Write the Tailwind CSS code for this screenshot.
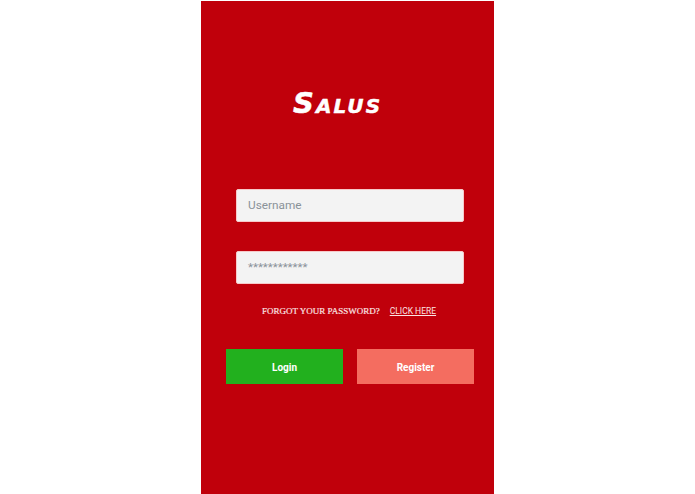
<!DOCTYPE html>
<html lang="en">
<head>
  <meta charset="UTF-8" />
  <meta name="viewport" content="width=device-width, initial-scale=1.0"/>
  <title>Salus</title>
  <script src="https://cdn.jsdelivr.net/npm/@tailwindcss/browser@4"></script>
</head>
<body class="bg-white">
  <div class="h-[494px] overflow-hidden pt-px">
    <main class="ml-[201px] w-[293px] h-[493px] bg-[#c0000b] font-['Roboto',sans-serif]">
      <!-- logo -->
      <div class="pt-[84px] h-[188px] pl-[92px]">
        <span class="block text-white font-['DejaVu_Sans',sans-serif] font-bold italic text-[29px] leading-[36px] tracking-[2.1px] [font-variant:small-caps] [-webkit-text-stroke:0.5px_white]">Salus</span>
      </div>
      <!-- fields -->
      <div class="pl-[35px] pr-[30px] flex flex-col gap-[29px]">
        <div class="h-[33px] bg-[#f3f3f3] rounded-[2px] border border-[#f7c9c9] pl-[11px] flex items-center text-[11.8px] text-[#8a9299]">Username</div>
        <div class="h-[33px] bg-[#f3f3f3] rounded-[2px] border border-[#f7c9c9] pl-[11px] flex items-center text-[11.5px] text-[#8a9299]">************</div>
      </div>
      <!-- forgot -->
      <div class="mt-[21px] h-[12px] pl-[61px] flex gap-[10px] text-[9px] leading-[12px] text-[#fbe3e3] font-['Liberation_Serif',serif]">
        <span class="[-webkit-text-stroke:0.2px_#fbe3e3]">FORGOT YOUR PASSWORD?</span>
        <a href="#" class="underline font-['Roboto',sans-serif] text-[8.5px]">CLICK HERE</a>
      </div>
      <!-- buttons -->
      <div class="mt-[32px] pl-[25px] pr-[20px] flex justify-between">
        <button class="w-[117px] h-[35px] pt-[2px] bg-[#22b01e] text-white text-[10px] font-bold">Login</button>
        <button class="w-[117px] h-[35px] pt-[2px] bg-[#f46d60] text-white text-[10px] font-bold">Register</button>
      </div>
    </main>
  </div>
</body>
</html>
